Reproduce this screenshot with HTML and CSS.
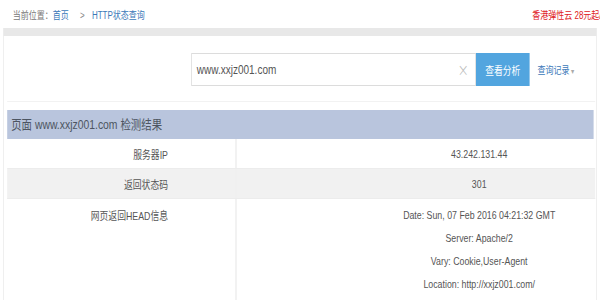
FILE: index.html
```html
<!DOCTYPE html>
<html lang="zh-CN">
<head>
<meta charset="utf-8">
<title>HTTP状态查询</title>
<link rel="stylesheet" href="styles.css">
</head>
<body>
<div class="page">
  <div class="top">
    <div class="crumb"><span class="label">当前位置：</span><a class="link" href="#">首页</a><span class="sep">&gt;</span><a class="link" href="#">HTTP状态查询</a></div>
    <div class="promo">香港弹性云 28元起/月</div>
  </div>
  <div class="graybar"></div>
  <div class="panel">
    <div class="search-area">
      <div class="search">
        <div class="input"><span class="val">www.xxjz001.com</span><span class="clear">×</span></div>
        <button class="btn">查看分析</button>
        <a class="history" href="#">查询记录 <span class="caret">▾</span></a>
      </div>
    </div>
    <div class="result">
      <div class="result-head">页面 www.xxjz001.com 检测结果</div>
      <div class="row">
        <div class="key">服务器IP</div>
        <div class="value">43.242.131.44</div>
      </div>
      <div class="row alt">
        <div class="key">返回状态码</div>
        <div class="value">301</div>
      </div>
      <div class="row multi">
        <div class="key">网页返回HEAD信息</div>
        <div class="value lines">
          <div>Date: Sun, 07 Feb 2016 04:21:32 GMT</div>
          <div>Server: Apache/2</div>
          <div>Vary: Cookie,User-Agent</div>
          <div>Location: http://xxjz001.com/</div>
          <div>Content-Length: 0</div>
        </div>
      </div>
    </div>
  </div>
</div>
</body>
</html>
```
FILE: styles.css
```css
html, body {
  margin: 0;
  padding: 0;
  background: #fff;
}
body {
  width: 600px;
  height: 300px;
  overflow: hidden;
  font-family: "Liberation Sans", "Noto Sans CJK SC", sans-serif;
  color: #555;
}
.page {
  width: 750px;
  transform: scaleX(0.8);
  transform-origin: 0 0;
}
.top {
  height: 28px;
  display: flex;
  align-items: center;
  justify-content: space-between;
  padding-left: 16px;
  font-size: 10px;
  white-space: nowrap;
}
.crumb .label { color: #777; }
.link { color: #3a78b8; text-decoration: none; }
.sep { color: #888; margin: 0 9px 0 14px; }
.promo {
  color: #e0201c;
  margin-right: -12px;
}
.graybar {
  height: 8px;
  margin: 0 4px;
  background: #e8e8e8;
}
.panel {
  margin: 0 4px;
  border-left: 1px solid #ececec;
  border-right: 1px solid #ececec;
  padding: 0 1px 0 4px;
  height: 300px;
}
.search-area {
  height: 66px;
  border-bottom: 1px solid #f2f2f2;
  padding-top: 17px;
  box-sizing: border-box;
}
.search {
  display: flex;
  align-items: center;
  margin-left: 230px;
}
.input {
  width: 340px;
  height: 31px;
  border: 1px solid #dcdcdc;
  display: flex;
  align-items: center;
  justify-content: space-between;
  padding: 0 8px 0 6px;
  font-size: 12.5px;
  color: #555;
}
.clear {
  color: #bbb;
  font-size: 17px;
  font-family: "DejaVu Sans", sans-serif;
  font-weight: 300;
}
.btn {
  width: 67px;
  height: 33px;
  border: 0;
  margin: 0;
  background: #52a5df;
  color: #fff;
  font-family: "Noto Sans CJK SC", sans-serif;
  font-size: 11px;
  padding: 0;
}
.history {
  margin-left: 10px;
  color: #3a78b8;
  text-decoration: none;
  font-size: 10px;
  font-family: "Noto Sans CJK SC", sans-serif;
}
.caret { color: #aaa; font-size: 8px; }
.result { margin-top: 8px; }
.result-head {
  height: 29px;
  line-height: 29px;
  background: #b9c5dd;
  padding-left: 5px;
  font-size: 13px;
  color: #4d5561;
  margin-right: 2px;
}
.row {
  display: flex;
  height: 30px;
  align-items: center;
  border-bottom: 1px solid #ececec;
  box-sizing: border-box;
  font-size: 11px;
  color: #555;
}
.row.alt { background: #f1f1f1; }
.key {
  width: 287px;
  box-sizing: border-box;
  padding-right: 84px;
  align-self: stretch;
  display: flex;
  align-items: center;
  justify-content: flex-end;
  border-right: 2px solid #efefef;
}
.value {
  flex: 1;
  text-align: center;
  padding-left: 158px;
}
.row.multi {
  height: auto;
  align-items: flex-start;
  border-bottom: 0;
}
.row.multi .key {
  align-items: flex-start;
  padding-top: 8px;
}
.lines div {
  line-height: 23px;
}
.lines { padding-top: 5px; }
```
